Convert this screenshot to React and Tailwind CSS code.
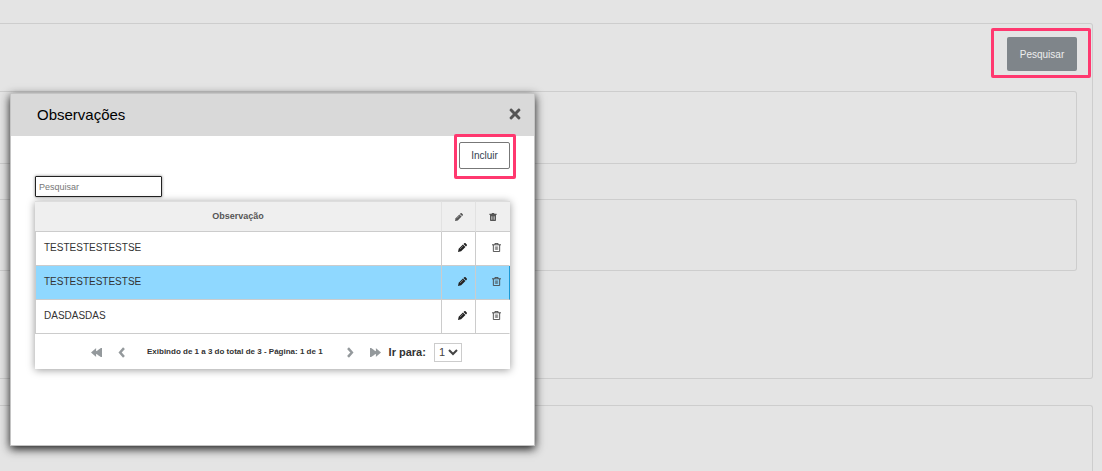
import { useState } from "react";
import { FaTimes } from "react-icons/fa";

const observacoes = [
  { id: 1, texto: "TESTESTESTESTSE" },
  { id: 2, texto: "TESTESTESTESTSE" },
  { id: 3, texto: "DASDASDAS" },
];

function PencilIcon({ className }) {
  return (
    <svg viewBox="0 0 20 20" fill="currentColor" className={className} aria-hidden="true">
      <path d="M0 20l1.500-7L11 3.500l5.500 5.500L7 18.500z" />
      <path d="M12.200 2.300L14 .6c.8-.8 2-.8 2.800 0l2.600 2.600c.8.8.8 2 0 2.800l-1.700 1.800z" />
      <path d="M4.500 13.500l7-7" stroke="#fff" strokeOpacity="0.6" strokeWidth="1.400" />
    </svg>
  );
}

function TrashIcon({ className }) {
  return (
    <svg viewBox="0 0 20 20" fill="currentColor" className={className} aria-hidden="true">
      <path d="M7 0h6v2h6v3H1V2h6z" />
      <path
        fillRule="evenodd"
        d="M2.500 5h15v13a2 2 0 0 1-2 2h-11a2 2 0 0 1-2-2zM6 8v9h1.300V8zm3.300 0v9h1.400V8zm3.400 0v9H14V8z"
      />
    </svg>
  );
}

function TrashOutlineIcon({ className }) {
  return (
    <svg
      viewBox="0 0 20 20"
      fill="none"
      stroke="currentColor"
      strokeWidth="2"
      className={className}
      aria-hidden="true"
    >
      <path d="M0 4h20M6.500 4V1h7v3M3 4v15h14V4" />
      <path d="M7.500 7.500v8M10 7.500v8M12.500 7.500v8" strokeWidth="1.300" />
    </svg>
  );
}

function ChevronIcon({ className }) {
  return (
    <svg
      viewBox="0 0 12 20"
      fill="none"
      stroke="currentColor"
      strokeWidth="4.500"
      className={className}
      aria-hidden="true"
    >
      <path d="M10.500 2L3.500 10l7 8" />
    </svg>
  );
}

function BackwardIcon({ className }) {
  return (
    <svg viewBox="0 0 20 16" fill="currentColor" className={className} aria-hidden="true">
      <path d="M0 8l9.500-8v5.500L18 0h2v16h-2l-8.500-5.500V16z" />
      <path d="M10.500 0v5M10.500 11v5" stroke="#fff" strokeWidth="1.500" />
    </svg>
  );
}

function Highlight({ className }) {
  return (
    <span
      className={`pointer-events-none absolute rounded-[2px] border-3 border-[#ff386f] ${className}`}
    />
  );
}

function Pagination({ total }) {
  return (
    <div className="flex h-[35px] items-center pt-px pl-14 text-[#94999c]">
      <button type="button" aria-label="Primeira página" className="mr-4">
        <BackwardIcon className="h-[9px] w-[11px]" />
      </button>
      <button type="button" aria-label="Página anterior" className="mr-5">
        <ChevronIcon className="h-[11px] w-[7px]" />
      </button>
      <span className="mr-6 pl-0.5 text-[8px] font-bold whitespace-nowrap text-[#333]">
        Exibindo de 1 a {total} do total de {total} - Página: 1 de 1
      </span>
      <button type="button" aria-label="Próxima página" className="mr-4">
        <ChevronIcon className="h-[11px] w-[7px] rotate-180" />
      </button>
      <button type="button" aria-label="Última página" className="mr-2">
        <BackwardIcon className="h-[9px] w-[11px] rotate-180" />
      </button>
      <label htmlFor="pagina" className="mr-2 text-[11px] font-bold text-[#333]">
        Ir para:
      </label>
      <select
        id="pagina"
        className="h-[19px] w-7 border border-[#ccc] bg-white text-[11px] text-[#444]"
      >
        <option>1</option>
      </select>
    </div>
  );
}

function ObservacoesModal() {
  const [busca, setBusca] = useState("");
  const [selecionada, setSelecionada] = useState(2);

  const filtradas = observacoes.filter((o) =>
    o.texto.toLowerCase().includes(busca.toLowerCase())
  );

  return (
    <div
      role="dialog"
      aria-labelledby="titulo"
      className="absolute top-[93px] left-[10px] w-[525px] max-w-full border border-[#c4c4c4] bg-white shadow-[0_3px_9px_rgba(0,0,0,0.9)]"
    >
      <div className="flex h-[42px] items-center justify-between bg-[#d9d9d9] pr-3 pl-[26px]">
        <h2 id="titulo" className="text-[15px] text-black">
          Observações
        </h2>
        <button type="button" aria-label="Fechar" className="pb-0.5 text-[#555]">
          <FaTimes className="h-4 w-3.5" />
        </button>
      </div>

      <div className="px-6 pt-1.5 pb-[76px]">
        <div className="flex justify-end">
          <div className="relative">
            <button
              type="button"
              className="block h-[27px] w-[51px] rounded-[2px] border border-[#777] bg-white text-[10px] text-[#333f4f]"
            >
              Incluir
            </button>
            <Highlight className="-top-2 -right-1.5 -bottom-2.5 -left-[5px]" />
          </div>
        </div>

        <input
          type="text"
          autoFocus
          placeholder="Pesquisar"
          aria-label="Pesquisar observação"
          value={busca}
          onChange={(e) => setBusca(e.target.value)}
          className="mt-[7px] mb-1 block h-[21px] w-[127px] rounded-[1px] border border-[#222] bg-white px-[3px] text-[9px] text-[#333] shadow-[0_0_3px_rgba(0,0,0,0.5)] outline-none placeholder:text-[#777]"
        />

        <div className="shadow-[0_1px_8px_rgba(0,0,0,0.4)]">
          <table className="w-full table-fixed border-separate border-spacing-0 text-[10px] text-[#333]">
            <thead className="bg-[#efefef] text-[9px] text-[#555]">
              <tr className="h-[31px]">
                <th className="border-y border-r border-y-[#ccc] border-r-[#e2e2e2] border-t-[#ddd] p-0">
                  Observação
                </th>
                <th
                  aria-label="Editar"
                  className="w-[34px] border-y border-r border-y-[#ccc] border-r-[#e2e2e2] border-t-[#ddd] p-0"
                >
                  <PencilIcon className="mx-auto h-2 w-2" />
                </th>
                <th
                  aria-label="Excluir"
                  className="w-[34px] border-y border-y-[#ccc] border-t-[#ddd] p-0"
                >
                  <TrashIcon className="mx-auto h-2 w-2" />
                </th>
              </tr>
            </thead>
            <tbody>
              {filtradas.map((o) => (
                <tr
                  key={o.id}
                  onClick={() => setSelecionada(o.id)}
                  className={`group h-[34px] ${o.id === selecionada ? "bg-[#8fd8ff]" : "bg-white"}`}
                  aria-selected={o.id === selecionada}
                >
                  <td className="border-x border-b border-[#ccc] p-0 pb-0.5 pl-2">{o.texto}</td>
                  <td className="border-r border-b border-[#ccc] p-0 pb-0.5 pl-4">
                    <button type="button" aria-label="Editar" className="block text-[#222]">
                      <PencilIcon className="h-[9px] w-[9px]" />
                    </button>
                  </td>
                  <td className="border-r border-b border-[#ccc] border-r-transparent p-0 pb-0.5 pl-4 group-aria-selected:border-r-[#1899d6]">
                    <button type="button" aria-label="Excluir" className="block text-[#444]">
                      <TrashOutlineIcon className="h-[9px] w-[9px]" />
                    </button>
                  </td>
                </tr>
              ))}
            </tbody>
          </table>
          <Pagination total={observacoes.length} />
        </div>
      </div>
    </div>
  );
}

function App() {
  return (
    <div className="relative flex h-screen flex-col overflow-hidden bg-[#e4e4e4] pt-[23px] pr-[9px] font-['Liberation_Sans',Arial,sans-serif]">
      <section className="shrink-0 rounded-r-[3px] border-y border-r border-[#cdcdcd] pt-[13px] pr-[15px] pb-[107px]">
        <div className="flex justify-end">
          <div className="relative">
            <button
              type="button"
              className="block h-[34px] w-[70px] rounded-[2px] bg-[#7f858a] text-[10px] text-[#eee]"
            >
              Pesquisar
            </button>
            <Highlight className="-top-[9px] -right-3.5 -bottom-[7px] -left-4" />
          </div>
        </div>
        <div className="mt-5 h-[73px] rounded-r-[3px] border-y border-r border-[#cdcdcd]" />
        <div className="mt-[35px] h-[72px] rounded-r-[3px] border-y border-r border-[#cdcdcd]" />
      </section>
      <section className="mt-[26px] flex-1 rounded-tr-[3px] border-t border-r border-[#cdcdcd]" />

      <ObservacoesModal />
    </div>
  );
}

export default App;
